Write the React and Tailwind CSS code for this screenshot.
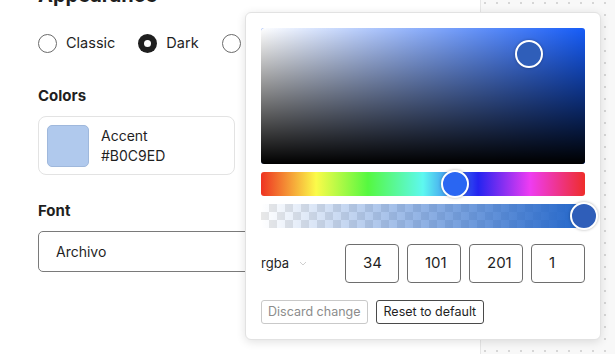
import React from "react";

function Radio({ checked, label }) {
  return (
    <div className="flex items-center gap-[9px] h-[20px]">
      {checked ? (
        <div className="w-[19px] h-[19px] rounded-full bg-[#1f1f1f] flex items-center justify-center">
          <div className="w-[7px] h-[7px] rounded-full bg-white" />
        </div>
      ) : (
        <div className="w-[19px] h-[19px] rounded-full border-[1.5px] border-[#6b6b6b] bg-white" />
      )}
      <span className="text-[14.5px] leading-[20px] text-[#1f1f1f]">{label}</span>
    </div>
  );
}

function NumBox({ v }) {
  return (
    <div className="w-[54px] h-[39px] rounded-[4px] border border-[#6e6e6e] flex items-center pl-[17px] text-[15px] text-[#1f1f1f]">
      {v}
    </div>
  );
}

export default function App() {
  return (
    <div
      className="relative w-[615px] h-[354px] overflow-hidden flex bg-white"
      style={{ fontFamily: "Inter, 'Noto Sans', sans-serif" }}
    >
      {/* left settings panel */}
      <div className="w-[481px] h-full bg-white border-r border-[#e6e6e6] pl-[38px] flex flex-col">
        <div className="mt-[-15px] text-[20px] font-bold text-[#1f1f1f] leading-[20px]">Appearance</div>
        <div className="mt-[28px] flex items-center gap-[23px]">
          <Radio label="Classic" />
          <Radio checked label="Dark" />
          <Radio label="Light" />
        </div>
        <div className="mt-[34px] text-[15px] font-bold text-[#1f1f1f] leading-[18px]">Colors</div>
        <div className="mt-[11px] w-[197px] h-[59px] rounded-[8px] border border-[#e3e3e3] flex items-center pl-[8px] gap-[12px]">
          <div className="w-[42px] h-[42px] rounded-[5px] bg-[#B0C9ED] border border-[#9fb8dc]" />
          <div className="flex flex-col text-[14px] text-[#1f1f1f] leading-[19.5px]">
            <span>Accent</span>
            <span>#B0C9ED</span>
          </div>
        </div>
        <div className="mt-[27px] text-[15px] font-bold text-[#1f1f1f] leading-[18px]">Font</div>
        <div className="mt-[11px] w-[400px] h-[41px] rounded-[5px] border border-[#7a7a7a] flex items-center pl-[17px] text-[14px] text-[#1f1f1f]">
          Archivo
        </div>
      </div>

      {/* canvas */}
      <div className="flex-1 h-full bg-[#f8f8f8] bg-[radial-gradient(circle,#d6d6d6_1px,transparent_1.3px)] bg-[size:12px_12px] [background-position:-2px_-3px]" />

      {/* color picker popover */}
      <div className="absolute left-[245px] top-[12px] w-[356px] h-[328px] bg-white rounded-[6px] border border-[#e2e2e2] shadow-[0_2px_10px_rgba(0,0,0,0.12)] p-[15px] flex flex-col">
        {/* saturation */}
        <div className="relative w-[324px] h-[136px] rounded-[3px] bg-[rgb(22,92,248)] overflow-visible">
          <div className="absolute inset-0 rounded-[3px] bg-[linear-gradient(to_right,#fff,rgba(255,255,255,0))]" />
          <div className="absolute inset-0 rounded-[3px] bg-[linear-gradient(to_top,#000,rgba(0,0,0,0))]" />
          <div className="absolute left-[254px] top-[12px] w-[28px] h-[28px] rounded-full border-[2.5px] border-white bg-[rgb(47,94,185)] shadow-[0_0_3px_rgba(0,0,0,0.3)]" />
        </div>
        {/* hue */}
        <div className="relative mt-[8px] w-[324px] h-[24px] rounded-[3px] bg-[linear-gradient(to_right,#ee3322,#fbfb4a_17%,#55f840_33%,#5ef8f0_50%,#2424f0_67%,#ee3cf2_83%,#ee2d2a)]">
          <div className="absolute left-[180px] top-[-2px] w-[28px] h-[28px] rounded-full border-[2.5px] border-white bg-[#2a66f2] shadow-[0_0_3px_rgba(0,0,0,0.3)]" />
        </div>
        {/* alpha */}
        <div className="relative mt-[8px] w-[324px] h-[24px] rounded-[3px] bg-[linear-gradient(to_right,rgba(34,101,201,0),rgb(34,101,201)),conic-gradient(#e8e8e8_25%,#ffffff_0_50%,#e8e8e8_0_75%,#ffffff_0)] [background-size:100%_100%,16px_16px]">
          <div className="absolute left-[309px] top-[-2px] w-[28px] h-[28px] rounded-full border-[2.5px] border-white bg-[rgb(47,94,185)] shadow-[0_0_3px_rgba(0,0,0,0.3)]" />
        </div>
        {/* inputs */}
        <div className="mt-[16px] flex items-center h-[39px]">
          <div className="w-[84px] flex items-center gap-[10px]">
            <span className="text-[13px] text-[#1f1f1f]">rgba</span>
            <svg width="8" height="5" viewBox="0 0 8 5" fill="none">
              <path d="M1 1l3 3 3-3" stroke="#cfcfcf" strokeWidth="1" />
            </svg>
          </div>
          <div className="flex gap-[8px]">
            <NumBox v="34" />
            <NumBox v="101" />
            <NumBox v="201" />
            <NumBox v="1" />
          </div>
        </div>
        {/* buttons */}
        <div className="mt-[17px] flex gap-[8px]">
          <div className="h-[24px] px-[6px] rounded-[3px] border border-[#c9c9c9] text-[12.5px] text-[#8c8c8c] flex items-center">
            Discard change
          </div>
          <div className="h-[24px] px-[7px] rounded-[3px] border border-[#4a4a4a] text-[12.5px] text-[#1f1f1f] flex items-center">
            Reset to default
          </div>
        </div>
      </div>
    </div>
  );
}
